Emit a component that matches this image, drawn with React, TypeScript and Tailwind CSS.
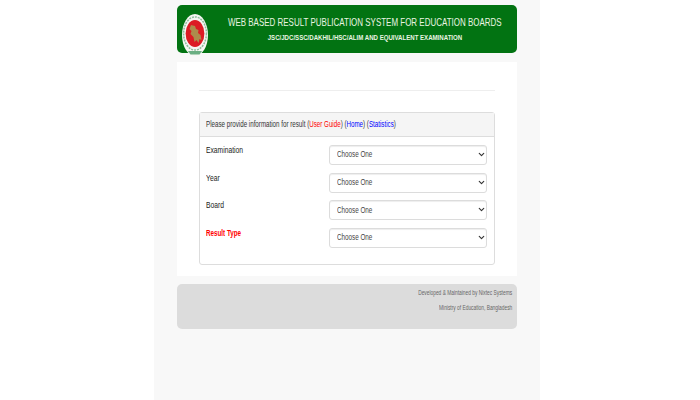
import { ChevronDown } from "lucide-react";

const Emblem = () => (
  <svg className="mt-[12px] shrink-0" width="26" height="42" viewBox="0 0 26 42">
    <ellipse cx="13" cy="21" rx="13" ry="21" fill="#f6f7f2" />
    <ellipse cx="13" cy="19.5" rx="11.4" ry="16.6" fill="none" stroke="#8fbd9d" strokeWidth="1.5" strokeDasharray="2 1" />
    <ellipse cx="13" cy="19.5" rx="9.4" ry="13.6" fill="#dc1c24" />
    <path d="M9 11l4 1 1 3 2.5 1-.5 3 2.5 2 1 5-2-1-1 4-2-3-2 2-1-5-3-3 1-3-2-2z" fill="#ad8c4c" />
    <path d="M6 37h14l-2.5 3.5h-9z" fill="#6aae82" />
  </svg>
);

const Row = ({ label, red }: { label: string; red?: boolean }) => (
  <div className="flex h-[27.7px] pl-[6px]">
    <div
      className={
        "mt-[-1px] w-[123px] origin-left whitespace-nowrap text-[9.5px] leading-[12px] " +
        (red ? "scale-x-[0.66] font-bold text-[#f00]" : "scale-x-[0.71] text-[#222]")
      }
    >
      {label}
    </div>
    <div className="relative h-[20px] w-[158px]">
      <div className="flex h-full w-full items-center rounded-[3px] border border-[#dcdcdc] bg-white pl-[7px] shadow-[inset_0_1px_1px_#00000012]">
        <span className="origin-left scale-x-[0.7] whitespace-nowrap text-[9px] text-[#444]">Choose One</span>
      </div>
      <ChevronDown className="absolute right-[1px] top-[5px] text-[#333]" size={9} strokeWidth={3} />
    </div>
  </div>
);

export default function App() {
  return (
    <div className="flex min-h-[400px] justify-center bg-white font-['Liberation_Sans',Arial,sans-serif]">
      <div className="ml-[-7px] flex h-[400px] w-[386px] flex-col items-center bg-[#f8f8f8] pt-[5px]">
        <div className="flex h-[48px] w-[340px] items-center rounded-[5px] bg-[#027312] pl-[5px]">
          <Emblem />
          <div className="ml-[5px] flex min-w-0 flex-1 flex-col items-center text-[#eaf5e2]">
            <div className="scale-x-[0.725] whitespace-nowrap text-[11px] leading-[12px]">
              WEB BASED RESULT PUBLICATION SYSTEM FOR EDUCATION BOARDS
            </div>
            <div className="mt-[5px] scale-x-[0.76] whitespace-nowrap text-[8px] font-bold leading-[10px]">
              JSC/JDC/SSC/DAKHIL/HSC/ALIM AND EQUIVALENT EXAMINATION
            </div>
          </div>
        </div>

        <div className="mt-[9px] h-[214px] w-[340px] bg-white px-[22px] pt-[28px]">
          <div className="h-px bg-[#eeeeee]" />
          <div className="mt-[21px] h-[153px] rounded-[3px] border border-[#dddddd]">
            <div className="flex h-[24px] items-center border-b border-[#dddddd] bg-[#f5f5f5] pl-[6px]">
              <div className="origin-left scale-x-[0.69] whitespace-nowrap text-[9px] text-[#333]">
                Please provide information for result (<span className="text-[#f00]">User Guide</span>) (
                <span className="text-[#00f]">Home</span>) (<span className="text-[#00f]">Statistics</span>)
              </div>
            </div>
            <div className="pt-[8px]">
              <Row label="Examination" />
              <Row label="Year" />
              <Row label="Board" />
              <Row label="Result Type" red />
            </div>
          </div>
        </div>

        <div className="mt-[8px] flex h-[45px] w-[340px] flex-col items-end rounded-[5px] bg-[#dcdcdc] pr-[4px] pt-[5px] text-[6.5px] leading-[8px] text-[#666]">
          <div className="origin-right scale-x-[0.745] whitespace-nowrap">Developed &amp; Maintained by Nixtec Systems</div>
          <div className="mt-[7px] origin-right scale-x-[0.745] whitespace-nowrap">Ministry of Education, Bangladesh</div>
        </div>
      </div>
    </div>
  );
}
